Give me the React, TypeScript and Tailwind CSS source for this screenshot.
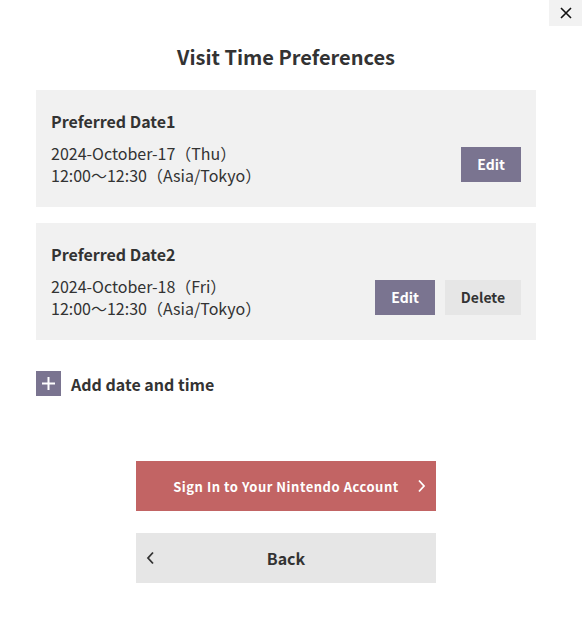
const font = "font-['Noto_Sans_CJK_JP','Noto_Sans',sans-serif]";

type Pref = { label: string; date: string; time: string; canDelete: boolean };

const prefs: Pref[] = [
  { label: "Preferred Date1", date: "2024-October-17（Thu）", time: "12:00〜12:30（Asia/Tokyo）", canDelete: false },
  { label: "Preferred Date2", date: "2024-October-18（Fri）", time: "12:00〜12:30（Asia/Tokyo）", canDelete: true },
];

function PrefCard({ pref }: { pref: Pref }) {
  return (
    <div className="flex h-[117px] flex-col bg-[#f1f1f1] px-[15px] pt-[20px]">
      <h3 className="text-[16px] font-bold leading-[23px] text-[#333]">{pref.label}</h3>
      <div className="mt-[9px] flex items-center justify-between">
        <div className="text-[16px] leading-[22px] text-[#333]">
          <p>{pref.date}</p>
          <p>{pref.time}</p>
        </div>
        <div className="flex gap-[10px]">
          <button className="h-[35px] w-[60px] bg-[#7a7490] text-[14px] font-bold text-white">Edit</button>
          {pref.canDelete && (
            <button className="h-[35px] w-[76px] bg-[#e6e6e6] text-[14px] font-bold text-[#333]">Delete</button>
          )}
        </div>
      </div>
    </div>
  );
}

export default function App() {
  return (
    <div className={`${font} relative h-[617px] w-[582px] bg-white`}>
      <button className="absolute right-0 top-0 flex h-[26px] w-[33px] items-center justify-center bg-[#f2f2f2]">
        <svg width="12" height="12" viewBox="0 0 12 12" fill="none" stroke="#111" strokeWidth="1.6">
          <path d="M1 1L11 11M11 1L1 11" />
        </svg>
      </button>
      <div className="ml-[36px] flex w-[500px] flex-col pt-[43px]">
        <h1 className="text-center text-[20px] font-bold leading-[28px] text-[#333]">Visit Time Preferences</h1>
        <div className="mt-[19px] flex flex-col gap-[16px]">
          {prefs.map((p) => (
            <PrefCard key={p.label} pref={p} />
          ))}
        </div>
        <button className="mt-[31px] flex items-center gap-[10px] self-start">
          <span className="flex h-[25px] w-[25px] items-center justify-center bg-[#7a7490]">
            <svg width="13" height="13" viewBox="0 0 13 13" stroke="#fff" strokeWidth="2">
              <path d="M6.5 0V13M0 6.5H13" />
            </svg>
          </span>
          <span className="text-[16px] font-bold leading-[24px] text-[#333]">Add date and time</span>
        </button>
        <div className="mt-[65px] flex flex-col items-center gap-[22px]">
          <button className="relative flex h-[50px] w-[300px] items-center justify-center bg-[#c26464]">
            <span className="pt-[2px] text-[13px] font-bold tracking-[0.04em] text-white">Sign In to Your Nintendo Account</span>
            <svg className="absolute right-[10px]" width="9" height="14" viewBox="0 0 9 14" fill="none" stroke="#fff" strokeWidth="1.8">
              <path d="M2 1.5L7 7L2 12.5" />
            </svg>
          </button>
          <button className="relative flex h-[50px] w-[300px] items-center justify-center bg-[#e6e6e6]">
            <svg className="absolute left-[10px]" width="9" height="14" viewBox="0 0 9 14" fill="none" stroke="#333" strokeWidth="1.8">
              <path d="M7 1.5L2 7L7 12.5" />
            </svg>
            <span className="text-[16px] font-bold text-[#333]">Back</span>
          </button>
        </div>
      </div>
    </div>
  );
}
